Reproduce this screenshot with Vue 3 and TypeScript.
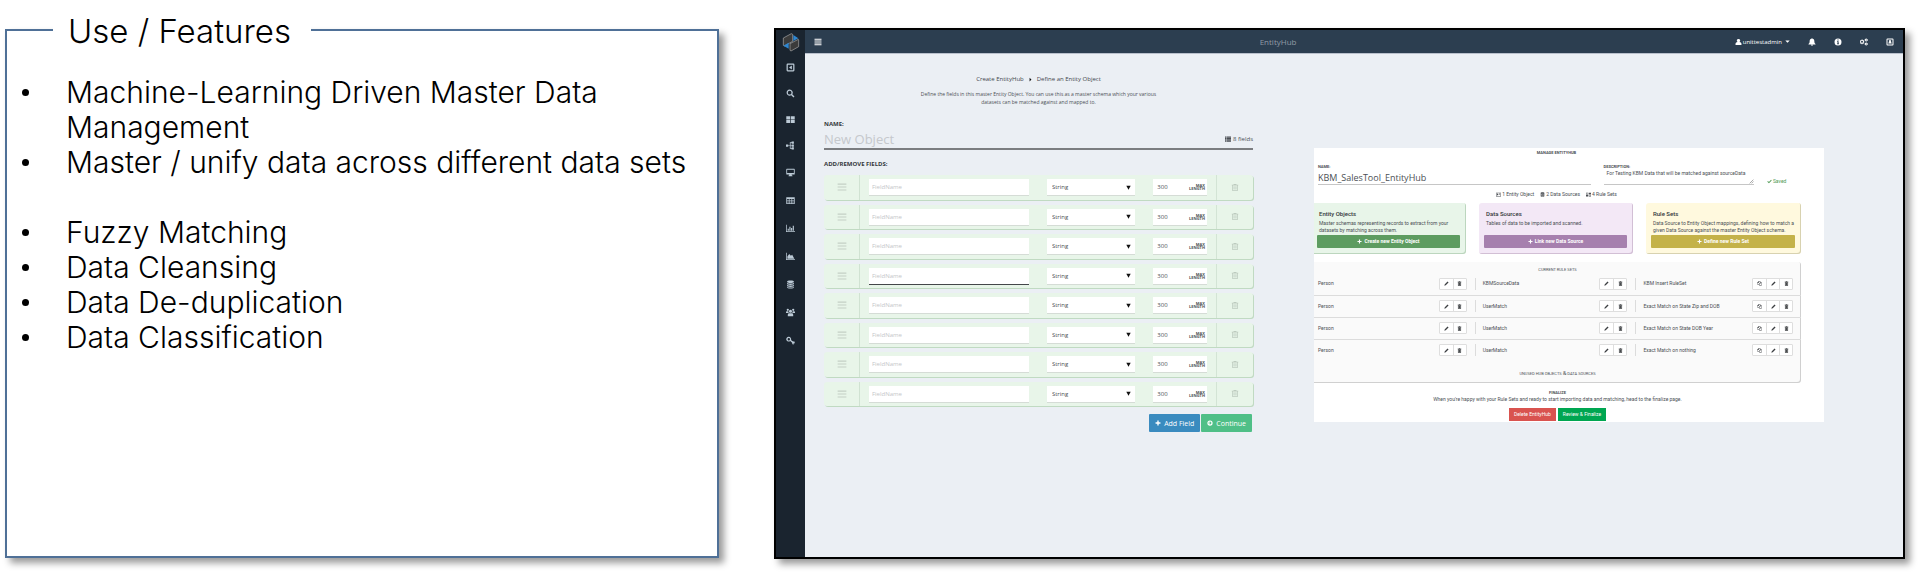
<script setup lang="ts">
import { ref } from 'vue'

interface FieldRow {
  id: number
  name: string
  type: string
  length: string
  active: boolean
}

interface HubCard {
  tone: string
  title: string
  text: string
  action: string
}

interface RuleRow {
  entity: string
  source: string
  rule: string
}

const icons: Record<string, string> = {
  bars: 'M1 1.5h14v2H1zM1 5.2h14v2H1zM1 8.9h14v2H1zM1 12.6h14v2H1z',
  grip: 'M1 2.4h14v1.8H1zM1 7.1h14v1.8H1zM1 11.8h14v1.8H1z',
  squareLeft: 'M3 1h10a2 2 0 0 1 2 2v10a2 2 0 0 1-2 2H3a2 2 0 0 1-2-2V3a2 2 0 0 1 2-2zM3.2 3.2v9.6h9.6V3.2zM10.4 4.4v7.2L5.4 8z',
  squareUser: 'M3 1h10a2 2 0 0 1 2 2v10a2 2 0 0 1-2 2H3a2 2 0 0 1-2-2V3a2 2 0 0 1 2-2zM3 3v10h10V3zM8 4a2.2 2.2 0 0 1 1.4 3.9c1.3.3 2 1.3 2 3.1H4.6c0-1.8.7-2.8 2-3.1A2.2 2.2 0 0 1 8 4z',
  search: 'M6.5 1a5.5 5.5 0 0 1 4.6 8.5l4 4-1.8 1.8-4-4A5.5 5.5 0 1 1 6.5 1zM6.5 3.2a3.3 3.3 0 1 0 0 6.6 3.3 3.3 0 0 0 0-6.6z',
  tiles: 'M.5 2h6.9v5.4H.5zM8.6 2h6.9v5.4H8.6zM.5 8.6h6.9V14H.5zM8.6 8.6h6.9V14H8.6z',
  tree: 'M0 6h4v4H0zM4 7.4h3v1.2H4zM6.800 2.400h1.400v11.200H6.800zM7 2.400h3v1.300H7zM7 7.400h3v1.200H7zM7 12.300h3v1.300H7zM10 1h4v4h-4zM10 6h4v4h-4zM10 11h4v4h-4z',
  desktop: 'M1.5 1.5h13a1 1 0 0 1 1 1v8a1 1 0 0 1-1 1H10l.6 2h.9v1.3h-7v-1.3h.9l.6-2H1.5a1 1 0 0 1-1-1v-8a1 1 0 0 1 1-1zM2 3v6h12V3z',
  table: 'M.5 2h15v12H.5zM2 5.5V7.4h3V5.5zM6.3 5.5V7.4h3.4V5.5zM11 5.5V7.4h3V5.5zM2 8.4v1.8h3V8.4zM6.3 8.4v1.8h3.4V8.4zM11 8.4v1.8h3V8.4zM2 11.2v1.5h3v-1.5zM6.3 11.2v1.5h3.4v-1.5zM11 11.2v1.5h3v-1.5z',
  bars2: 'M0 1.5h1.3V13H16v1.3H0zM3 8.5h2V12H3zM6 5h2v7H6zM9 7h2v5H9zM12 3h2v9h-2z',
  area: 'M0 1.5h1.3V13H16v1.3H0zM2.5 12V8l3.2-4.5 3 3 2.3-1.5L14.8 12z',
  database: 'M8 .8c3.8 0 6.2 1 6.2 2.2S11.8 5.2 8 5.2 1.8 4.2 1.8 3 4.2.8 8 .8zM1.8 4.8C3.2 5.9 5.5 6.3 8 6.3s4.8-.4 6.2-1.5v1.9C14.2 7.9 11.8 8.8 8 8.8S1.8 7.9 1.8 6.7zM1.8 8.3C3.2 9.4 5.5 9.8 8 9.8s4.8-.4 6.2-1.5v1.9c0 1.2-2.4 2.1-6.2 2.1s-6.2-.9-6.2-2.1zM1.8 11.8c1.4 1.1 3.7 1.5 6.2 1.5s4.8-.4 6.2-1.5V13c0 1.3-2.4 2.3-6.2 2.3S1.8 14.3 1.8 13z',
  users: 'M3.2 1.2a2 2 0 1 1 0 4 2 2 0 0 1 0-4zM12.8 1.2a2 2 0 1 1 0 4 2 2 0 0 1 0-4zM8 3a2.8 2.8 0 1 1 0 5.6A2.8 2.8 0 0 1 8 3zM0 9V7.5c0-1.2.8-1.9 2-1.9h2.2c-.2 1.5.2 2.5 1 3.4zM16 9V7.5c0-1.2-.8-1.9-2-1.9h-2.2c.2 1.5-.2 2.5-1 3.4zM3.2 14.8v-2.5c0-2 .9-3 2.6-3h4.4c1.7 0 2.6 1 2.6 3v2.5z',
  keys: 'M5 1.5a4.2 4.2 0 0 1 3.9 5.8l3 2.2 3.8.8-.6 3-1.6-.2.2 2-2.3-.4-.5-2.9-3.4-3A4.2 4.2 0 1 1 5 1.5zM5 3.6a2.1 2.1 0 1 0 0 4.2 2.1 2.1 0 0 0 0-4.2z',
  user: 'M8 1a3.7 3.7 0 0 1 2.2 6.8C13.5 8.2 15 10 15 13c0 1.2-.7 2-1.8 2H2.8C1.7 15 1 14.2 1 13c0-3 1.5-4.8 4.8-5.2A3.7 3.7 0 0 1 8 1z',
  caret: 'M1 5h14l-7 7z',
  bell: 'M8 .5c.8 0 1.2.5 1.2 1.2C11.6 2.3 12.7 4 12.7 6.5c0 3 .8 4.5 2.3 5.7v.8H1v-.8c1.5-1.2 2.3-2.7 2.3-5.7C3.3 4 4.4 2.3 6.8 1.7 6.8 1 7.2.5 8 .5zM6 13.7h4a2 2 0 0 1-4 0z',
  info: 'M8 1a7 7 0 1 1 0 14A7 7 0 0 1 8 1zM6.8 3v2.2h2.4V3zM6 6.5V8h1v3H6v1.5h4V11H9.2V6.5z',
  cogs: 'M5 3l.6 1.2 1.3-.3.9 1-.5 1.3 1.2.8v1.4l-1.2.7.4 1.4-1 1-1.3-.4-.7 1.3H3.3l-.6-1.3-1.4.3-.9-1 .4-1.3L-.3 8.4V7l1.2-.8-.5-1.3 1-1 1.3.4L3.3 3zM4 5.7a2 2 0 1 0 0 4 2 2 0 0 0 0-4zM11.5 1h1.8l.4 1 1.1-.2.8 1.3-.7.9.7.9-.8 1.3-1.1-.2-.4 1h-1.8l-.4-1-1.1.2-.8-1.3.7-.9-.7-.9.8-1.3 1.1.2zM12.4 2.9a1.1 1.1 0 1 0 0 2.2 1.1 1.1 0 0 0 0-2.2zM11.5 9h1.8l.4 1 1.1-.2.8 1.3-.7.9.7.9-.8 1.3-1.1-.2-.4 1h-1.8l-.4-1-1.1.2-.8-1.3.7-.9-.7-.9.8-1.3 1.1.2zM12.4 10.9a1.1 1.1 0 1 0 0 2.2 1.1 1.1 0 0 0 0-2.2z',
  plus: 'M6.2 1.5h3.6v4.7h4.7v3.6H9.8v4.7H6.2V9.8H1.5V6.2h4.7z',
  arrow: 'M8 1a7 7 0 1 1 0 14A7 7 0 0 1 8 1zM8 3.5L6.8 4.8l2 2H3.8v2.4h5l-2 2L8 12.5 12.5 8z',
  trash: 'M5.5.8h5l.8 1.7h3.2V4h-1v10.2a1 1 0 0 1-1 1h-9a1 1 0 0 1-1-1V4h-1V2.5h3.2zM4 4v9.7h8V4zM5.2 5.5h1.2v6.7H5.2zM7.4 5.5h1.2v6.7H7.4zM9.6 5.5h1.2v6.7H9.6z',
  trashSolid: 'M5.5 1h5v1.5H14V4H2V2.5h3.5zM3 5h10v10H3zM5.5 6.5V13h1V6.5zM9.5 6.5V13h1V6.5z',
  list: 'M0 1.5h3v3H0zM4 1.5h12v3H4zM0 5h3v3H0zM4 5h12v3H4zM0 8.5h3v3H0zM4 8.5h12v3H4zM0 12h3v3H0zM4 12h12v3H4z',
  pencil: 'M11.5 1.5l3 3-9 9L1 15l1.5-4.5z',
  copy: 'M5 1h6v3h4v10H7v-3H1V5zM5 3L3 5h2zM6.2 2.2V6H2.2v3.8H7V8l3-3V2.2zM11 5.5L8.5 8H11zM12 5.2V9H8.2v3.8h5.6V5.2z',
  check: 'M1 8.5L3 6.3l3.2 3L13 2.5l2 2-8.8 9z',
  card: 'M0 2h16v12H0zM1.5 3.5v9h13v-9zM3 5h4v5H3zM9 5h4v1.5H9zM9 8h4v1.5H9z',
  sets: 'M0 2h7v5H0zM9 2h7v5H9zM1.2 3.2v2.6h4.6V3.2zM0 9h7v5H0zM9 9h7v5H9zM10.2 10.2v2.6h4.6v-2.6z',
  next: 'M5 2l6 6-6 6z',
}

const features: { text: string; spaced?: boolean }[] = [
  { text: 'Machine-Learning Driven Master Data Management' },
  { text: 'Master / unify data across different data sets', spaced: true },
  { text: 'Fuzzy Matching' },
  { text: 'Data Cleansing' },
  { text: 'Data De-duplication' },
  { text: 'Data Classification' },
]

const navigation = [
  { icon: 'squareLeft', label: 'Collapse' },
  { icon: 'search', label: 'Search' },
  { icon: 'tiles', label: 'Dashboard' },
  { icon: 'tree', label: 'Hierarchy' },
  { icon: 'desktop', label: 'Monitor' },
  { icon: 'table', label: 'Tables' },
  { icon: 'bars2', label: 'Bar charts' },
  { icon: 'area', label: 'Area charts' },
  { icon: 'database', label: 'Databases' },
  { icon: 'users', label: 'Users' },
  { icon: 'keys', label: 'Access' },
]

const tools = [
  { icon: 'bell', label: 'Notifications' },
  { icon: 'info', label: 'Information' },
  { icon: 'cogs', label: 'Settings' },
  { icon: 'squareUser', label: 'Account' },
]

const createRow = (id: number): FieldRow => ({ id, name: '', type: 'String', length: '300', active: id === 4 })

const objectName = ref('')
const fields = ref<FieldRow[]>(Array.from({ length: 8 }, (_, i) => createRow(i + 1)))
const addField = () => {
  fields.value.push(createRow(Math.max(0, ...fields.value.map((f) => f.id)) + 1))
}
const removeField = (id: number) => {
  fields.value = fields.value.filter((f) => f.id !== id)
}

const hubName = ref('KBM_SalesTool_EntityHub')
const hubDescription = ref('For Testing KBM Data that will be matched against sourceData')

const cards: HubCard[] = [
  {
    tone: 'green',
    title: 'Entity Objects',
    text: 'Master schemas representing records to extract from your datasets by matching across them.',
    action: 'Create new Entity Object',
  },
  {
    tone: 'purple',
    title: 'Data Sources',
    text: 'Tables of data to be imported and scanned.',
    action: 'Link new Data Source',
  },
  {
    tone: 'yellow',
    title: 'Rule Sets',
    text: 'Data Source to Entity Object mappings, defining how to match a given Data Source against the master Entity Object schema.',
    action: 'Define new Rule Set',
  },
]

const rules: RuleRow[] = [
  { entity: 'Person', source: 'KBMSourceData', rule: 'KBM Insert RuleSet' },
  { entity: 'Person', source: 'UserMatch', rule: 'Exact Match on State Zip and DOB' },
  { entity: 'Person', source: 'UserMatch', rule: 'Exact Match on State DOB Year' },
  { entity: 'Person', source: 'UserMatch', rule: 'Exact Match on nothing' },
]
const ruleColumns: { key: keyof RuleRow; actions: string[] }[] = [
  { key: 'entity', actions: ['pencil', 'trashSolid'] },
  { key: 'source', actions: ['pencil', 'trashSolid'] },
  { key: 'rule', actions: ['copy', 'pencil', 'trashSolid'] },
]
const actionLabels: Record<string, string> = { pencil: 'Edit', trashSolid: 'Delete', copy: 'Copy' }
</script>

<template>
  <main class="slide">
    <section class="features">
      <h1 class="features-title">Use / Features</h1>
      <ul class="features-list">
        <li v-for="item in features" :key="item.text" :class="{ spaced: item.spaced }">{{ item.text }}</li>
      </ul>
    </section>

    <section class="app">
      <nav class="sidebar" aria-label="Main">
        <a href="#" class="logo" aria-label="Home">
          <svg viewBox="0 0 54 58">
            <path d="M4 17L28 4l4 2v21L7 41l-3-2z" fill="#3b3b3b" stroke="#a9a9a9" stroke-width="2" />
            <path d="M24 34l25-13 1 2v20L27 56l-3-2z" fill="#3b3b3b" stroke="#a9a9a9" stroke-width="2" />
            <path d="M34 8l15 10-15 8z" fill="#2f86d0" />
            <path d="M4 40l16-9v18z" fill="#2f86d0" />
          </svg>
        </a>
        <a v-for="item in navigation" :key="item.icon" href="#" class="nav-item" :aria-label="item.label">
          <svg class="icon nav-icon" viewBox="0 0 16 16"><path :d="icons[item.icon]" /></svg>
        </a>
      </nav>

      <header class="topbar">
        <button type="button" class="plain" aria-label="Menu">
          <svg class="icon menu-icon" viewBox="0 0 16 16"><path :d="icons.bars" /></svg>
        </button>
        <span class="brand">EntityHub</span>
        <div class="tools">
          <button type="button" class="plain account">
            <svg class="icon user-icon" viewBox="0 0 16 16"><path :d="icons.user" /></svg>
            unittestadmin
            <svg class="icon tiny-icon" viewBox="0 0 16 16"><path :d="icons.caret" /></svg>
          </button>
          <button v-for="tool in tools" :key="tool.icon" type="button" class="plain tool" :aria-label="tool.label">
            <svg class="icon menu-icon" viewBox="0 0 16 16"><path :d="icons[tool.icon]" /></svg>
          </button>
        </div>
      </header>

      <div class="content">
        <form class="define" @submit.prevent>
          <nav class="crumbs" aria-label="Breadcrumb">
            <a href="#">Create EntityHub</a>
            <svg class="icon tiny-icon crumb-icon" viewBox="0 0 16 16"><path :d="icons.next" /></svg>
            <span>Define an Entity Object</span>
          </nav>
          <p class="intro">
            Define the fields in this master Entity Object. You can use this as a master schema which your various
            datasets can be matched against and mapped to.
          </p>

          <label class="caption" for="object-name">NAME:</label>
          <div class="name-line">
            <input id="object-name" v-model="objectName" type="text" placeholder="New Object" />
            <span class="count">
              <svg class="icon small-icon" viewBox="0 0 16 16"><path :d="icons.list" /></svg>
              {{ fields.length }} fields
            </span>
          </div>

          <h2 class="caption fields-caption">ADD/REMOVE FIELDS:</h2>
          <ul class="fields">
            <li v-for="field in fields" :key="field.id" class="field">
              <button type="button" class="plain handle" aria-label="Reorder field">
                <svg class="icon grip-icon" viewBox="0 0 16 16"><path :d="icons.grip" /></svg>
              </button>
              <div class="field-body">
                <input
                  v-model="field.name"
                  class="box field-name"
                  :class="{ active: field.active }"
                  type="text"
                  placeholder="FieldName"
                  aria-label="Field name"
                />
                <div class="box type">
                  <select v-model="field.type" aria-label="Field type">
                    <option>String</option>
                    <option>Number</option>
                    <option>Date</option>
                  </select>
                  <svg class="icon arrow-icon" viewBox="0 0 16 16"><path d="M1 2h14L8 15z" /></svg>
                </div>
                <label class="box length">
                  <input v-model="field.length" type="text" />
                  <span>MAX<br />LENGTH</span>
                </label>
              </div>
              <button type="button" class="plain remove" aria-label="Remove field" @click="removeField(field.id)">
                <svg class="icon trash-icon" viewBox="0 0 16 16"><path :d="icons.trash" /></svg>
              </button>
            </li>
          </ul>

          <div class="form-actions">
            <button type="button" class="solid blue" @click="addField">
              <svg class="icon small-icon" viewBox="0 0 16 16"><path :d="icons.plus" /></svg>
              Add Field
            </button>
            <button type="submit" class="solid mint">
              <svg class="icon small-icon" viewBox="0 0 16 16"><path :d="icons.arrow" /></svg>
              Continue
            </button>
          </div>
        </form>

        <article class="hub">
          <h2 class="micro hub-title">MANAGE ENTITYHUB</h2>
          <div class="hub-head">
            <div class="hub-name">
              <label class="micro" for="hub-name">NAME:</label>
              <input id="hub-name" v-model="hubName" type="text" />
            </div>
            <div class="hub-description">
              <label class="micro" for="hub-description">DESCRIPTION:</label>
              <textarea id="hub-description" v-model="hubDescription" rows="2"></textarea>
              <svg class="resize" viewBox="0 0 8 8"><path d="M1 7l6-6M4 7l3-3" /></svg>
            </div>
            <span class="saved">
              <svg class="icon tiny-icon" viewBox="0 0 16 16"><path :d="icons.check" /></svg>
              Saved
            </span>
          </div>

          <p class="summary">
            <span><svg class="icon tiny-icon" viewBox="0 0 16 16"><path :d="icons.card" /></svg> 1 Entity Object</span>
            <span><svg class="icon tiny-icon" viewBox="0 0 16 16"><path :d="icons.database" /></svg> 2 Data Sources</span>
            <span><svg class="icon tiny-icon" viewBox="0 0 16 16"><path :d="icons.sets" /></svg> 4 Rule Sets</span>
          </p>

          <div class="cards">
            <section v-for="card in cards" :key="card.tone" class="card" :class="card.tone">
              <h3>{{ card.title }}</h3>
              <p>{{ card.text }}</p>
              <button type="button">
                <svg class="icon tiny-icon" viewBox="0 0 16 16"><path :d="icons.plus" /></svg>
                {{ card.action }}
              </button>
            </section>
          </div>

          <section class="rules">
            <h3 class="micro light">CURRENT RULE SETS</h3>
            <table>
              <colgroup>
                <col class="third" />
                <col class="third" />
                <col />
              </colgroup>
              <tbody>
                <tr v-for="(rule, index) in rules" :key="index">
                  <td v-for="column in ruleColumns" :key="column.key">
                    <div class="cell">
                      <span>{{ rule[column.key] }}</span>
                      <span class="group">
                        <button v-for="action in column.actions" :key="action" type="button" :aria-label="actionLabels[action]">
                          <svg class="icon tiny-icon" viewBox="0 0 16 16"><path :d="icons[action]" /></svg>
                        </button>
                      </span>
                    </div>
                  </td>
                </tr>
              </tbody>
            </table>
            <h3 class="micro light unused">UNUSED HUB OBJECTS <b>&amp;</b> DATA SOURCES</h3>
          </section>

          <footer class="finalize">
            <h3 class="micro">FINALIZE</h3>
            <p>When you're happy with your Rule Sets and ready to start importing data and matching, head to the finalize page.</p>
            <div class="final-actions">
              <button type="button" class="danger">Delete EntityHub</button>
              <button type="button" class="success">Review &amp; Finalize</button>
            </div>
          </footer>
        </article>
      </div>
    </section>
  </main>
</template>

<style>
body {
  background: #fff;
}
</style>

<style scoped>
* {
  box-sizing: border-box;
}
h1, h2, h3, p, ul {
  margin: 0;
  padding: 0;
}
ul {
  list-style: none;
}
button, input, select, textarea {
  font: inherit;
  color: inherit;
  margin: 0;
  padding: 0;
  border: 0;
  border-radius: 0;
  background: none;
  outline: none;
  min-width: 0;
}
a {
  color: inherit;
  text-decoration: none;
}
.icon {
  display: block;
  flex: none;
  fill: currentColor;
  fill-rule: evenodd;
}
.nav-icon { width: 9px; height: 9px; }
.menu-icon { width: 8px; height: 8px; }
.user-icon { width: 7px; height: 8px; }
.small-icon { width: 6px; height: 6px; }
.tiny-icon { width: 5px; height: 5px; }
.grip-icon { width: 10px; height: 10px; }
.trash-icon { width: 8px; height: 9px; }
.arrow-icon { width: 5px; height: 5px; }
.nav-icon path[d^="M0 6h4v4"] {
  fill-rule: nonzero;
}

.slide {
  display: grid;
  grid-template-columns: 714fr 1131fr;
  gap: 55px;
  min-height: 100vh;
  padding: 28px 13px 13px 5px;
}

.features {
  margin: 1px 0;
  border: 2px solid #4f7097;
  box-shadow: 5px 5px 7px rgba(0, 0, 0, 0.4);
  font-family: "Century Gothic", Inter, sans-serif;
  font-weight: 300;
  color: #000;
}
.features-title {
  width: max-content;
  margin: -20px 0 0 46px;
  padding: 0 20px 0 15px;
  background: #fff;
  font-size: 33px;
  line-height: 40px;
  font-weight: 300;
}
.features-list {
  padding: 24px 4px 0 59px;
  font-size: 30px;
  line-height: 35px;
}
.features-list li {
  position: relative;
}
.features-list li::before {
  content: "";
  position: absolute;
  left: -44px;
  top: 14px;
  width: 7px;
  height: 7px;
  border-radius: 50%;
  background: #000;
}
.features-list .spaced {
  margin-bottom: 35px;
}

.app {
  display: grid;
  grid-template-columns: 29px 1fr;
  grid-template-rows: 23px 1fr;
  border: 2px solid #000;
  box-shadow: 5px 5px 7px rgba(0, 0, 0, 0.4);
  background: #ebeff4;
  color: #4b4f54;
  font-family: "Segoe UI", "Open Sans", sans-serif;
  font-size: 6px;
}
.sidebar {
  grid-row: 1 / 3;
  display: flex;
  flex-direction: column;
  background: #1a242f;
  color: #bccad6;
}
.logo {
  display: flex;
  justify-content: center;
  align-items: center;
  height: 24px;
}
.logo svg {
  width: 18px;
  height: 20px;
}
.nav-item {
  display: flex;
  justify-content: center;
  align-items: center;
  height: 28px;
}
.nav-item:nth-child(-n + 5) {
  height: 26px;
}

.topbar {
  display: grid;
  grid-template-columns: 446fr auto 603fr;
  align-items: center;
  padding: 0 4px 0 9px;
  background: #2c3e50;
  box-shadow: 0 1px 0 #b9c0cc;
  color: #fff;
}
.plain {
  display: flex;
  align-items: center;
  justify-content: center;
  cursor: pointer;
}
.topbar > .plain {
  justify-self: start;
}
.brand {
  font-size: 8px;
  line-height: 12px;
  color: #919ba5;
}
.tools {
  display: flex;
  justify-content: flex-end;
}
.account {
  gap: 1px;
  margin-right: 9px;
}
.account .tiny-icon {
  margin-left: 2px;
}
.tool {
  width: 26px;
}
.tool:last-child {
  width: 18px;
  margin-left: 4px;
}

.content {
  display: grid;
  grid-template-columns: 429fr 510fr;
  gap: 61px;
  align-items: start;
  padding: 0 79px 0 19px;
}
.crumbs {
  display: flex;
  justify-content: center;
  align-items: center;
  gap: 4px;
  padding-top: 20px;
  line-height: 12px;
  color: #43474c;
}
.crumb-icon {
  color: #111;
}
.intro {
  max-width: 250px;
  margin: 5px auto 0;
  text-align: center;
  font-size: 5px;
  line-height: 8px;
}
.caption {
  display: block;
  margin-top: 13px;
  font-size: 6px;
  line-height: 10px;
  font-weight: 700;
  color: #34383c;
}
.name-line {
  display: flex;
  align-items: center;
  border-bottom: 2px solid #7b7d80;
}
.name-line input {
  flex: 1;
  height: 19px;
  font-size: 13px;
}
.name-line input::placeholder {
  color: #c5c8cc;
  opacity: 1;
}
.count {
  display: flex;
  align-items: center;
  gap: 2px;
}
.fields-caption {
  margin-top: 9px;
}
.fields {
  display: grid;
  gap: 5px;
  min-height: 231px;
  margin-top: 6px;
}
.field {
  display: flex;
  min-height: 24px;
  border-radius: 3px;
  background: #e8f5e9;
  box-shadow: 1px 1px 0 #c0dac2;
}
.handle {
  width: 36px;
  border-right: 1px solid #d0e2d2;
  color: #c3d0c5;
}
.remove {
  width: 37px;
  border-left: 1px solid #d3e4d5;
  color: #bccabe;
}
.field-body {
  flex: 1;
  display: grid;
  grid-template-columns: 161fr 89fr 54fr;
  gap: 18px;
  padding: 4px 9px;
  align-items: center;
}
.box {
  width: 100%;
  height: 16px;
  background: #fff;
  box-shadow: 0 1px 0 #d5dcd6;
}
.field-name {
  padding: 0 3px;
}
.field-name::placeholder {
  color: #c4c6c8;
  opacity: 1;
}
.field-name.active {
  box-shadow: 0 1px 0 #44474a;
}
.type, .length {
  display: flex;
  align-items: center;
}
.type select {
  flex: 1;
  height: 16px;
  padding-left: 5px;
  appearance: none;
}
.type .icon {
  margin-right: 4px;
  color: #111;
}
.length {
  padding: 0 2px 0 4px;
}
.length input {
  flex: 1;
  width: 20px;
}
.length span {
  font-size: 4px;
  line-height: 3px;
  font-weight: 700;
  text-align: right;
}
.form-actions {
  display: flex;
  justify-content: flex-end;
  gap: 1px;
  margin: 8px 1px 0 0;
}
.solid {
  display: flex;
  align-items: center;
  justify-content: center;
  gap: 3px;
  height: 18px;
  padding: 0 6px;
  border-radius: 1px;
  font-size: 7px;
  color: #fff;
}
.blue { background: #3a8bbf; }
.mint { background: #4fbf87; }

.hub {
  margin-top: 95px;
  background: #fff;
  color: #4b4f54;
  font-family: "Segoe UI", Roboto, sans-serif;
  font-size: 5px;
  line-height: 7px;
}
.micro {
  display: block;
  font-size: 4px;
  line-height: 6px;
  font-weight: 700;
}
.light {
  font-weight: 400;
}
.hub-title {
  padding-top: 2px;
  margin-right: 25px;
  text-align: center;
}
.hub-head {
  display: grid;
  grid-template-columns: 272fr 150fr 57fr;
  gap: 13px;
  padding: 8px 0 0 4px;
}
.hub-name input {
  display: block;
  width: 100%;
  height: 15px;
  border-bottom: 1px solid #c6c6c6;
  font-family: "Segoe UI", "Open Sans", sans-serif;
  font-size: 9px;
}
.hub-description {
  position: relative;
}
.hub-description textarea {
  display: block;
  width: 100%;
  height: 15px;
  padding: 0 3px;
  border-bottom: 1px solid #c6c6c6;
  resize: none;
  overflow: hidden;
}
.resize {
  position: absolute;
  right: 0;
  bottom: 1px;
  width: 5px;
  height: 5px;
  fill: none;
  stroke: #777;
}
.saved {
  display: flex;
  align-items: center;
  gap: 1px;
  align-self: end;
  color: #4f9a55;
}
.summary {
  display: flex;
  justify-content: center;
  gap: 6px;
  margin: 6px 25px 5px 0;
}
.summary span {
  display: flex;
  align-items: center;
  gap: 1px;
}
.cards {
  display: grid;
  grid-template-columns: 152fr 154fr 155fr;
  gap: 13px;
  padding-right: 23px;
}
.card {
  display: flex;
  flex-direction: column;
  padding: 6px 6px 6px 5px;
  border-radius: 3px;
  min-height: 51px;
}
.card h3 {
  padding-left: 2px;
  font-size: 6px;
  line-height: 10px;
  font-weight: 500;
  color: #33373b;
}
.card p {
  padding-left: 2px;
  margin-top: 1px;
}
.card button {
  display: flex;
  justify-content: center;
  align-items: center;
  gap: 2px;
  height: 13px;
  margin-top: auto;
  border-radius: 1px;
  font-weight: 700;
  color: #fff;
}
.green {
  padding-left: 3px;
  border-radius: 0 3px 3px 0;
  background: #e8f5e9;
  box-shadow: inset -1px -1px 0 #bcd6be;
}
.purple { background: #f3e8f6; box-shadow: inset -1px -1px 0 #d2bfd5; }
.yellow { background: #fff9de; box-shadow: inset -1px -1px 0 #d8d2b0; }
.green button { background: #5d9c60; }
.purple button { background: #a680ae; }
.yellow button { background: #c4b249; }

.rules {
  margin: 8px 23px 0 0;
  padding-top: 5px;
  border-radius: 0 3px 3px 0;
  background: #fafafa;
  box-shadow: inset -1px -1px 0 #d0d0d0;
}
.rules h3 {
  text-align: center;
}
.rules table {
  width: 100%;
  border-collapse: collapse;
  table-layout: fixed;
}
.third {
  width: 33%;
}
.rules td {
  height: 22px;
  padding: 0;
  border-bottom: 1px solid #dcdcdc;
}
.rules tr:last-child td {
  border-bottom: 0;
}
.cell {
  display: flex;
  align-items: center;
  justify-content: space-between;
  height: 12px;
  padding: 0 8px 0 7px;
  border-left: 1px solid #dcdcdc;
}
td:first-child .cell {
  padding-left: 4px;
  border-left: 0;
}
.group {
  display: flex;
  border: 1px solid #dedede;
  border-radius: 1px;
  background: #fff;
}
.group button {
  display: flex;
  justify-content: center;
  align-items: center;
  width: 13px;
  height: 10px;
  color: #3c3f42;
}
.group button + button {
  border-left: 1px solid #dedede;
}
.unused {
  padding: 8px 0 5px;
  line-height: 8px;
}
.unused b {
  font-size: 6px;
  font-weight: 400;
}
.finalize {
  margin-right: 23px;
  padding: 7px 0 1px;
  text-align: center;
}
.final-actions {
  display: flex;
  justify-content: center;
  gap: 2px;
  margin-top: 5px;
}
.final-actions button {
  height: 13px;
  padding: 0 5px;
  color: #fff;
}
.danger { background: #d9534f; }
.success { background: #00a651; }
</style>
